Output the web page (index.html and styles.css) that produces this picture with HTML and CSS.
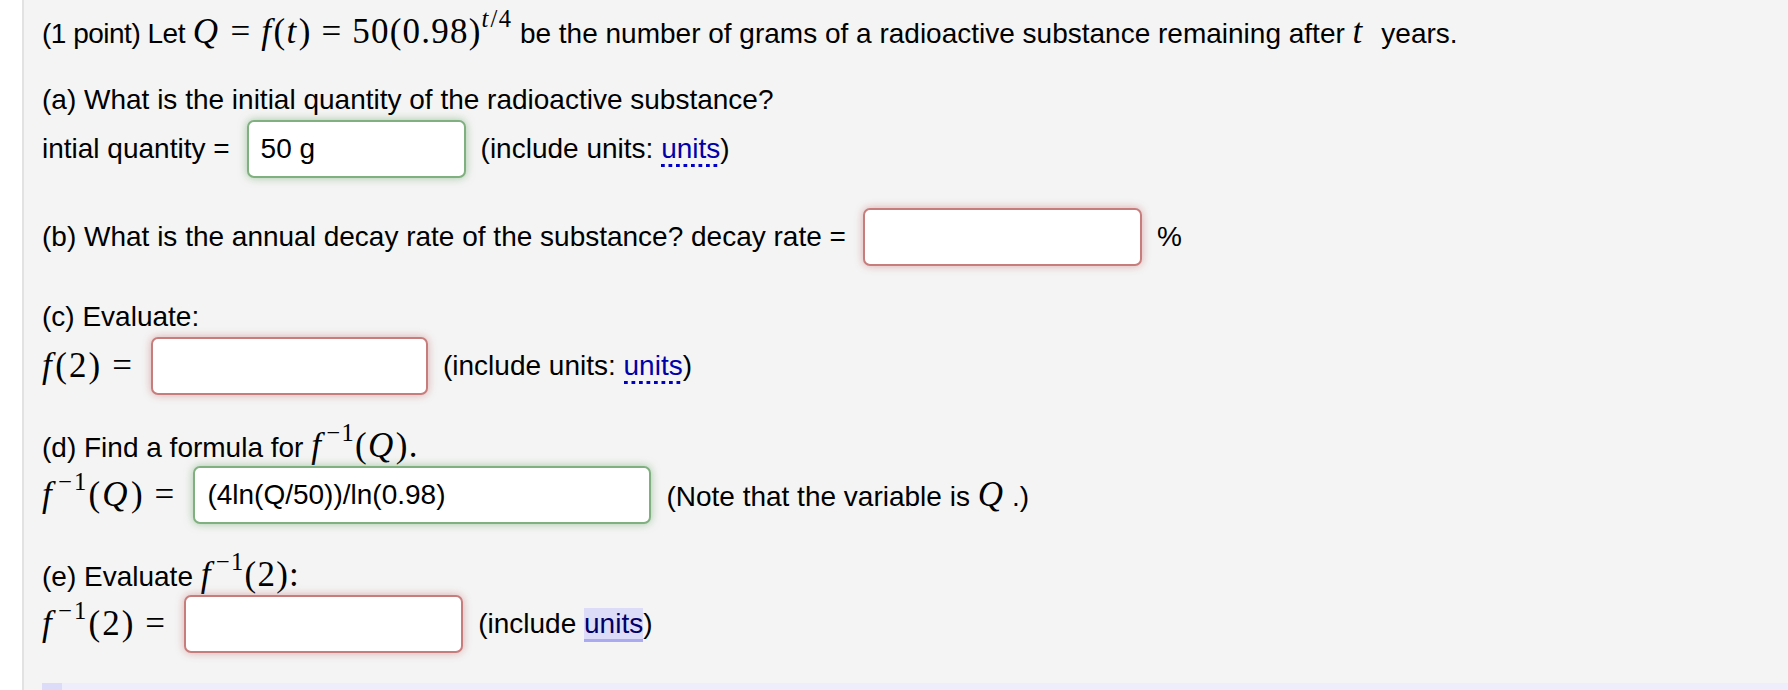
FILE: index.html
```html
<!DOCTYPE html>
<html lang="en">
<head>
    <meta charset="UTF-8" />
    <title>Radioactive decay</title>
    <link rel="stylesheet" href="styles.css">
</head>
<body>
    <div class="page">
        <div class="problem">
            <p class="intro"><span class="pts">(1 point) Let</span> <span class="m tight"><i>Q</i><span class="rel">=</span><i>f</i>(<i>t</i>)<span class="rel">=</span>50(0.98)<sup><i>t</i>/4</sup></span> be the number of grams of a radioactive substance remaining after <span class="m"><i>t</i></span>&nbsp; years.</p>

            <div class="part">
                <p class="q">(a) What is the initial quantity of the radioactive substance?</p>
                <div class="row">
                    <span>intial quantity =</span>
                    <input class="ans correct w-a" type="text" value="50 g">
                    <span>(include units: <a class="knowl" href="#">units</a>)</span>
                </div>
            </div>

            <div class="part">
                <div class="row">
                    <span>(b) What is the annual decay rate of the substance? decay rate =</span>
                    <input class="ans incorrect w-b" type="text" value="">
                    <span>%</span>
                </div>
            </div>

            <div class="part">
                <p class="q">(c) Evaluate:</p>
                <div class="row">
                    <span class="m"><i>f</i>(2)<span class="rel end">=</span></span>
                    <input class="ans incorrect w-c" type="text" value="">
                    <span>(include units: <a class="knowl" href="#">units</a>)</span>
                </div>
            </div>

            <div class="part">
                <p class="q">(d) Find a formula for <span class="m tight"><i>f</i><sup class="inv">&minus;1</sup>(<i>Q</i>).</span></p>
                <div class="row">
                    <span class="m"><i>f</i><sup class="inv">&minus;1</sup>(<i>Q</i>)<span class="rel end">=</span></span>
                    <input class="ans correct w-d" type="text" value="(4ln(Q/50))/ln(0.98)">
                    <span>(Note that the variable is <span class="m"><i>Q</i></span>&thinsp;.)</span>
                </div>
            </div>

            <div class="part">
                <p class="q">(e) Evaluate <span class="m tight"><i>f</i><sup class="inv">&minus;1</sup>(2):</span></p>
                <div class="row">
                    <span class="m"><i>f</i><sup class="inv">&minus;1</sup>(2)<span class="rel end">=</span></span>
                    <input class="ans incorrect w-e" type="text" value="">
                    <span>(include <a class="knowl active" href="#">units</a>)</span>
                </div>
            </div>
        </div>

        <div class="knowl-out"></div>
    </div>
</body>
</html>
```

FILE: styles.css
```css
body {
    margin: 0;
    background: #fff;
    font-family: "Liberation Sans", Arial, Helvetica, sans-serif;
    font-size: 28px;
    color: #000;
}
.page {
    margin-left: 22px;
    border-left: 2px solid #e2e2e2;
    background: #f4f4f4;
    min-height: 100vh;
    padding-left: 18px;
    overflow: hidden;
}
.problem {
    padding-top: 11px;
}
.intro {
    margin: 0;
    height: 38px;
    line-height: 41px;
    white-space: nowrap;
}
.pts {
    letter-spacing: -0.5px;
}
.part {
    margin-top: 30px;
}
.q {
    margin: 0;
    height: 41px;
    line-height: 41px;
    white-space: nowrap;
}
.row {
    display: flex;
    align-items: center;
    height: 58px;
    white-space: nowrap;
}

/* math */
.m {
    font-family: "Liberation Serif", "Times New Roman", serif;
    font-size: 35px;
    letter-spacing: 0.06em;
}
.m.tight {
    letter-spacing: 0.035em;
}
.m i {
    font-style: italic;
    padding-right: 0.04em;
}
.m sup {
    font-size: 0.7em;
    vertical-align: 0.65em;
    line-height: 0;
}
.m sup.inv {
    margin-left: 0.12em;
}
.rel {
    margin: 0 0.28em;
}
.rel.end {
    margin-right: 0;
}

/* answer boxes */
.ans {
    box-sizing: border-box;
    height: 58px;
    margin: 0 15px 0 17px;
    padding: 0 12px;
    font-family: "Liberation Sans", Arial, sans-serif;
    font-size: 28px;
    color: #000;
    background: #fff;
    border: 2px solid #ccc;
    border-radius: 7px;
    outline: none;
}
.ans.correct {
    border-color: #80b080;
    box-shadow: 0 0 9px rgba(81, 153, 81, 0.5);
}
.ans.incorrect {
    border-color: #c87d7d;
    box-shadow: 0 0 9px rgba(191, 84, 84, 0.45);
}
.w-a { width: 219px; }
.w-b { width: 279px; }
.w-c { width: 277px; }
.w-d { width: 458px; }
.w-e { width: 279px; }

.knowl {
    color: #0000a8;
    text-decoration: none;
    padding-bottom: 3px;
    background: linear-gradient(to right, #0000c8 45%, transparent 45%) repeat-x left bottom / 7.5px 3px;
}
.knowl.active {
    color: #000066;
    padding-bottom: 0;
    background: #dcdcf8;
    border-bottom: 3px solid #a9aaf0;
}

.knowl-out {
    margin-top: 30px;
    height: 40px;
    border-left: 20px solid #dcdcf8;
    background: #ededfb;
}
```
